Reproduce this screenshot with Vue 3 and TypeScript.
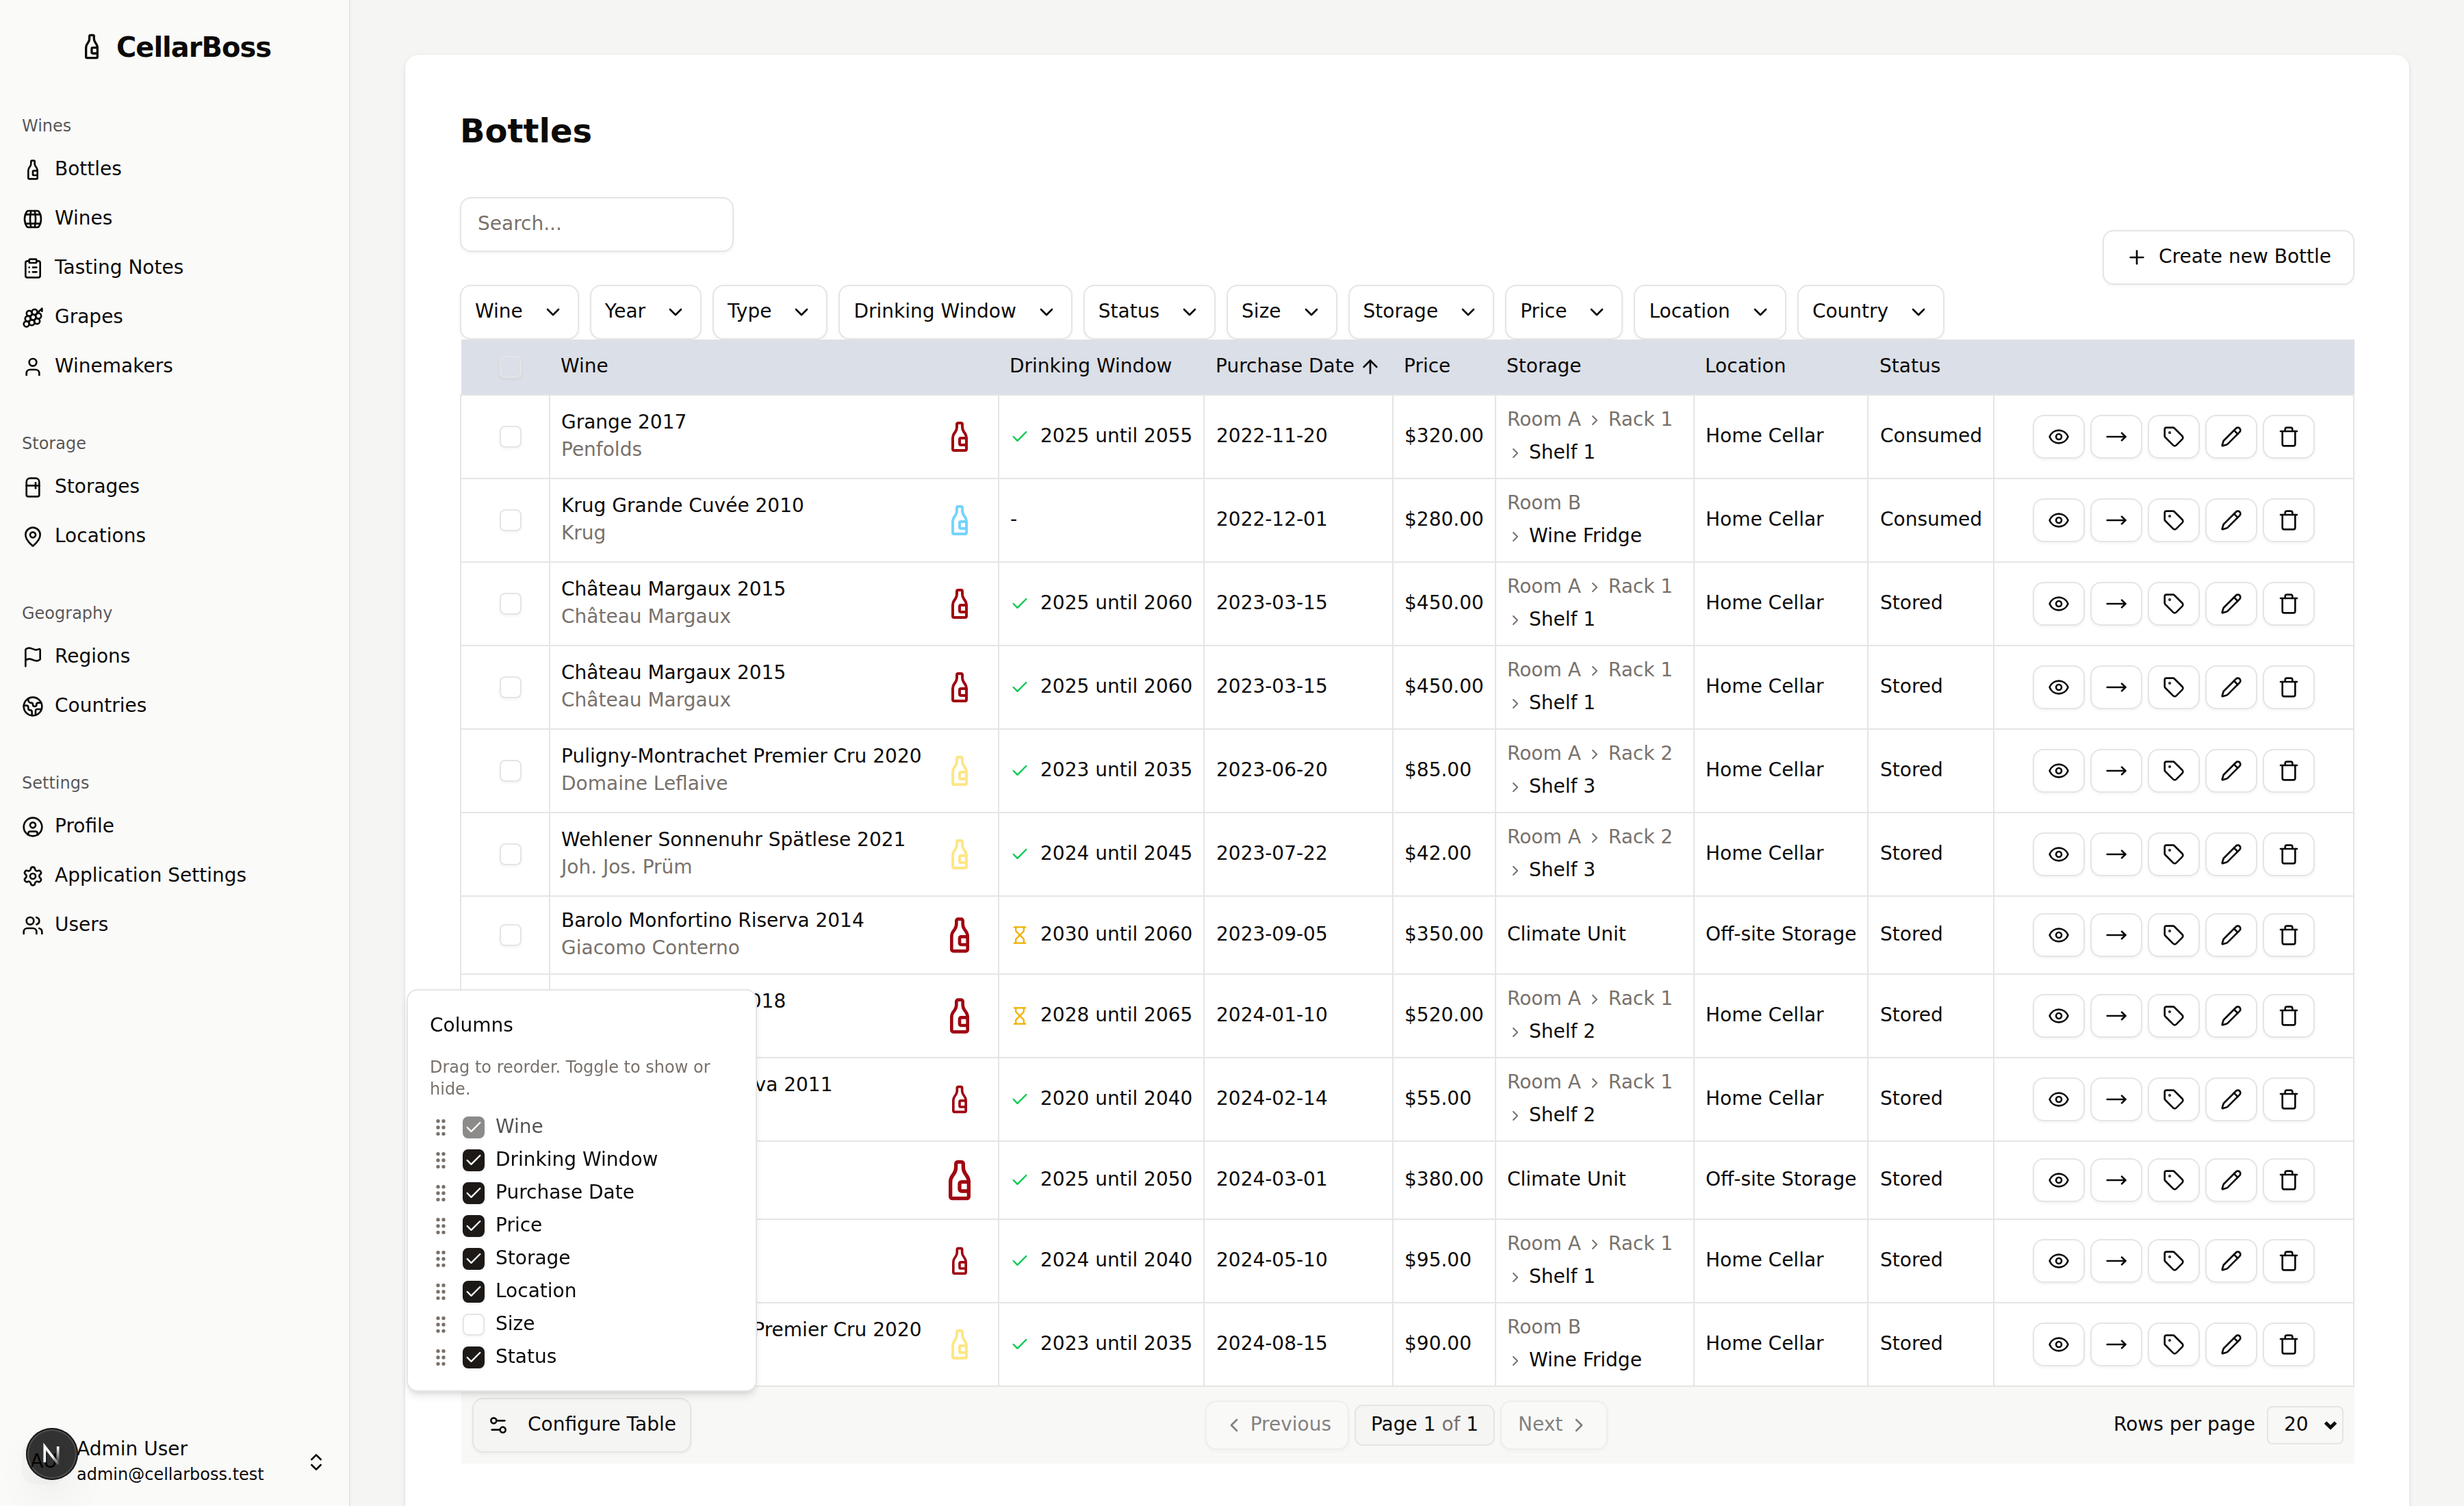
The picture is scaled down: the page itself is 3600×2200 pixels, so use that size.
<script setup lang="ts">
import { h } from 'vue'

const icons: Record<string, string> = {
  bottle:
    '<path d="M10 3a1 1 0 0 1 1-1h2a1 1 0 0 1 1 1v2a6 6 0 0 0 1.2 3.6l.6.8A6 6 0 0 1 17 13v8a1 1 0 0 1-1 1H8a1 1 0 0 1-1-1v-8a6 6 0 0 1 1.2-3.6l.6-.8A6 6 0 0 0 10 5z"/><path d="M17 13h-4a1 1 0 0 0-1 1v3a1 1 0 0 0 1 1h4"/>',
  barrel:
    '<path d="M10 3a41 41 0 0 0 0 18"/><path d="M14 3a41 41 0 0 1 0 18"/><path d="M17 3a2 2 0 0 1 1.68.92 15.25 15.25 0 0 1 0 16.16A2 2 0 0 1 17 21H7a2 2 0 0 1-1.68-.92 15.25 15.25 0 0 1 0-16.16A2 2 0 0 1 7 3z"/><path d="M3.84 17h16.32"/><path d="M3.84 7h16.32"/>',
  clipboard:
    '<rect width="8" height="4" x="8" y="2" rx="1" ry="1"/><path d="M16 4h2a2 2 0 0 1 2 2v14a2 2 0 0 1-2 2H6a2 2 0 0 1-2-2V6a2 2 0 0 1 2-2h2"/><path d="M12 11h4"/><path d="M12 16h4"/><path d="M8 11h.01"/><path d="M8 16h.01"/>',
  grape:
    '<path d="M22 5V2l-5.89 5.89"/><circle cx="16.6" cy="15.89" r="3"/><circle cx="8.11" cy="7.4" r="3"/><circle cx="12.35" cy="11.65" r="3"/><circle cx="13.91" cy="5.85" r="3"/><circle cx="18.15" cy="10.09" r="3"/><circle cx="6.56" cy="13.2" r="3"/><circle cx="10.8" cy="17.44" r="3"/><circle cx="5" cy="19" r="3"/>',
  user: '<path d="M19 21v-2a4 4 0 0 0-4-4H9a4 4 0 0 0-4 4v2"/><circle cx="12" cy="7" r="4"/>',
  fridge:
    '<path d="M5 6a4 4 0 0 1 4-4h6a4 4 0 0 1 4 4v14a2 2 0 0 1-2 2H7a2 2 0 0 1-2-2Z"/><path d="M5 10h14"/><path d="M15 7v6"/>',
  pin: '<path d="M20 10c0 4.993-5.539 10.193-7.399 11.799a1 1 0 0 1-1.202 0C9.539 20.193 4 14.993 4 10a8 8 0 0 1 16 0"/><circle cx="12" cy="10" r="3"/>',
  flag: '<path d="M4 22V4a1 1 0 0 1 .4-.8A6 6 0 0 1 8 2c3 0 5 2 7.333 2q2 0 3.067-.8A1 1 0 0 1 20 4v10a1 1 0 0 1-.4.8A6 6 0 0 1 16 16c-3 0-5-2-8-2a6 6 0 0 0-4 1.528"/>',
  earth:
    '<path d="M21.54 15H17a2 2 0 0 0-2 2v4.54"/><path d="M7 3.34V5a3 3 0 0 0 3 3a2 2 0 0 1 2 2c0 1.1.9 2 2 2a2 2 0 0 0 2-2c0-1.1.9-2 2-2h3.17"/><path d="M11 21.95V18a2 2 0 0 0-2-2a2 2 0 0 1-2-2v-1a2 2 0 0 0-2-2H2.05"/><circle cx="12" cy="12" r="10"/>',
  profile:
    '<circle cx="12" cy="12" r="10"/><circle cx="12" cy="10" r="3"/><path d="M7 20.662V19a2 2 0 0 1 2-2h6a2 2 0 0 1 2 2v1.662"/>',
  gear: '<path d="M9.671 4.136a2.34 2.34 0 0 1 4.659 0 2.34 2.34 0 0 0 3.319 1.915 2.34 2.34 0 0 1 2.33 4.033 2.34 2.34 0 0 0 0 3.831 2.34 2.34 0 0 1-2.33 4.033 2.34 2.34 0 0 0-3.319 1.915 2.34 2.34 0 0 1-4.659 0 2.34 2.34 0 0 0-3.32-1.915 2.34 2.34 0 0 1-2.33-4.033 2.34 2.34 0 0 0 0-3.831A2.34 2.34 0 0 1 6.35 6.051a2.34 2.34 0 0 0 3.319-1.915"/><circle cx="12" cy="12" r="3"/>',
  users:
    '<path d="M16 21v-2a4 4 0 0 0-4-4H6a4 4 0 0 0-4 4v2"/><path d="M16 3.128a4 4 0 0 1 0 7.744"/><path d="M22 21v-2a4 4 0 0 0-3-3.87"/><circle cx="9" cy="7" r="4"/>',
  eye: '<path d="M2.062 12.348a1 1 0 0 1 0-.696 10.75 10.75 0 0 1 19.876 0 1 1 0 0 1 0 .696 10.75 10.75 0 0 1-19.876 0"/><circle cx="12" cy="12" r="3"/>',
  move: '<path d="M18 8L22 12L18 16"/><path d="M2 12H22"/>',
  tag: '<path d="M12.586 2.586A2 2 0 0 0 11.172 2H4a2 2 0 0 0-2 2v7.172a2 2 0 0 0 .586 1.414l8.704 8.704a2.426 2.426 0 0 0 3.42 0l6.58-6.58a2.426 2.426 0 0 0 0-3.42z"/><circle cx="7.5" cy="7.5" r=".5" fill="currentColor"/>',
  pencil:
    '<path d="M21.174 6.812a1 1 0 0 0-3.986-3.987L3.842 16.174a2 2 0 0 0-.5.83l-1.321 4.352a.5.5 0 0 0 .623.622l4.353-1.32a2 2 0 0 0 .83-.497z"/><path d="m15 5 4 4"/>',
  trash:
    '<path d="M19 6v14a2 2 0 0 1-2 2H7a2 2 0 0 1-2-2V6"/><path d="M3 6h18"/><path d="M8 6V4a2 2 0 0 1 2-2h4a2 2 0 0 1 2 2v2"/>',
  sliders: '<path d="M14 17H5"/><path d="M19 7h-9"/><circle cx="17" cy="17" r="3"/><circle cx="7" cy="7" r="3"/>',
  check: '<path d="M20 6 9 17l-5-5"/>',
  hourglass:
    '<path d="M5 22h14"/><path d="M5 2h14"/><path d="M17 22v-4.172a2 2 0 0 0-.586-1.414L12 12l-4.414 4.414A2 2 0 0 0 7 17.828V22"/><path d="M7 2v4.172a2 2 0 0 0 .586 1.414L12 12l4.414-4.414A2 2 0 0 0 17 6.172V2"/>',
  plus: '<path d="M5 12h14"/><path d="M12 5v14"/>',
  down: '<path d="m6 9 6 6 6-6"/>',
  right: '<path d="m9 18 6-6-6-6"/>',
  left: '<path d="m15 18-6-6 6-6"/>',
  up: '<path d="m5 12 7-7 7 7"/><path d="M12 19V5"/>',
  updown: '<path d="m7 15 5 5 5-5"/><path d="m7 9 5-5 5 5"/>',
  grip: '<circle cx="9" cy="12" r="1"/><circle cx="9" cy="5" r="1"/><circle cx="9" cy="19" r="1"/><circle cx="15" cy="12" r="1"/><circle cx="15" cy="5" r="1"/><circle cx="15" cy="19" r="1"/>',
}

const Icon = (props: { name: string; size?: number }) =>
  h('svg', {
    width: props.size ?? 32,
    height: props.size ?? 32,
    viewBox: '0 0 24 24',
    fill: 'none',
    stroke: 'currentColor',
    'stroke-width': 2,
    'stroke-linecap': 'round',
    'stroke-linejoin': 'round',
    innerHTML: icons[props.name],
  })

const groups = [
  {
    label: 'Wines',
    items: [
      ['bottle', 'Bottles'],
      ['barrel', 'Wines'],
      ['clipboard', 'Tasting Notes'],
      ['grape', 'Grapes'],
      ['user', 'Winemakers'],
    ],
  },
  { label: 'Storage', items: [['fridge', 'Storages'], ['pin', 'Locations']] },
  { label: 'Geography', items: [['flag', 'Regions'], ['earth', 'Countries']] },
  { label: 'Settings', items: [['profile', 'Profile'], ['gear', 'Application Settings'], ['users', 'Users']] },
]

const filters = ['Wine', 'Year', 'Type', 'Drinking Window', 'Status', 'Size', 'Storage', 'Price', 'Location', 'Country']

interface Bottle {
  wine: string
  maker: string
  type: 'red' | 'white' | 'sparkling'
  size: number
  window: string
  ready?: boolean
  date: string
  price: string
  storage: string[]
  location: string
  status: string
}

const row = (
  wine: string,
  maker: string,
  type: Bottle['type'],
  size: number,
  window: string,
  date: string,
  price: string,
  storage: string[],
  status = 'Stored',
): Bottle => ({
  wine,
  maker,
  type,
  size,
  window,
  ready: window < '2027',
  date,
  price,
  storage,
  location: storage[0] === 'Climate Unit' ? 'Off-site Storage' : 'Home Cellar',
  status,
})

const bottles: Bottle[] = [
  row('Grange 2017', 'Penfolds', 'red', 48, '2025 until 2055', '2022-11-20', '$320.00', ['Room A', 'Rack 1', 'Shelf 1'], 'Consumed'),
  row('Krug Grande Cuvée 2010', 'Krug', 'sparkling', 48, '-', '2022-12-01', '$280.00', ['Room B', 'Wine Fridge'], 'Consumed'),
  row('Château Margaux 2015', 'Château Margaux', 'red', 48, '2025 until 2060', '2023-03-15', '$450.00', ['Room A', 'Rack 1', 'Shelf 1']),
  row('Château Margaux 2015', 'Château Margaux', 'red', 48, '2025 until 2060', '2023-03-15', '$450.00', ['Room A', 'Rack 1', 'Shelf 1']),
  row('Puligny-Montrachet Premier Cru 2020', 'Domaine Leflaive', 'white', 48, '2023 until 2035', '2023-06-20', '$85.00', ['Room A', 'Rack 2', 'Shelf 3']),
  row('Wehlener Sonnenuhr Spätlese 2021', 'Joh. Jos. Prüm', 'white', 48, '2024 until 2045', '2023-07-22', '$42.00', ['Room A', 'Rack 2', 'Shelf 3']),
  row('Barolo Monfortino Riserva 2014', 'Giacomo Conterno', 'red', 56, '2030 until 2060', '2023-09-05', '$350.00', ['Climate Unit']),
  row('Château Margaux 2018', '', 'red', 56, '2028 until 2065', '2024-01-10', '$520.00', ['Room A', 'Rack 1', 'Shelf 2']),
  row('Viña Tondonia Reserva 2011', '', 'red', 44, '2020 until 2040', '2024-02-14', '$55.00', ['Room A', 'Rack 1', 'Shelf 2']),
  row('', '', 'red', 64, '2025 until 2050', '2024-03-01', '$380.00', ['Climate Unit']),
  row('', '', 'red', 44, '2024 until 2040', '2024-05-10', '$95.00', ['Room A', 'Rack 1', 'Shelf 1']),
  row('Puligny-Montrachet Premier Cru 2020', '', 'white', 48, '2023 until 2035', '2024-08-15', '$90.00', ['Room B', 'Wine Fridge']),
]

const actions = ['eye', 'move', 'tag', 'pencil', 'trash']

const columns = [
  { label: 'Wine', on: true, locked: true },
  { label: 'Drinking Window', on: true },
  { label: 'Purchase Date', on: true },
  { label: 'Price', on: true },
  { label: 'Storage', on: true },
  { label: 'Location', on: true },
  { label: 'Size', on: false },
  { label: 'Status', on: true },
]
</script>

<template>
  <div class="app">
    <aside class="sidebar">
      <div class="brand"><Icon name="bottle" :size="40" /><span>CellarBoss</span></div>
      <nav>
        <section v-for="g in groups" :key="g.label" class="group">
          <div class="group-label">{{ g.label }}</div>
          <a v-for="[icon, label] in g.items" :key="label" class="nav-item">
            <Icon :name="icon" /><span class="t">{{ label }}</span>
          </a>
        </section>
      </nav>
      <div class="account">
        <div class="avatar">AU</div>
        <div class="who">
          <span class="name">Admin User</span>
          <span class="mail">admin@cellarboss.test</span>
        </div>
        <Icon name="updown" />
        <div class="dev-badge">
          <svg width="76" height="76" viewBox="0 0 76 76" fill="none">
            <defs>
              <linearGradient id="diag" x1="38" y1="40" x2="48" y2="54" gradientUnits="userSpaceOnUse">
                <stop stop-color="#fff" />
                <stop offset=".6" stop-color="#fff" stop-opacity=".5" />
                <stop offset="1" stop-color="#fff" stop-opacity="0" />
              </linearGradient>
              <linearGradient id="stem" x1="46" y1="28" x2="46" y2="51" gradientUnits="userSpaceOnUse">
                <stop stop-color="#fff" />
                <stop offset="1" stop-color="#fff" stop-opacity="0" />
              </linearGradient>
            </defs>
            <path d="M49 55.4 27.3 27v23.2" stroke="url(#diag)" stroke-width="3.7" />
            <path d="M46.7 27v24" stroke="url(#stem)" stroke-width="3.7" />
          </svg>
        </div>
      </div>
    </aside>

    <main class="main">
      <div class="card">
        <h1>Bottles</h1>
        <div class="toolbar">
          <div class="tools">
            <div class="search">Search...</div>
            <div class="filters">
              <button v-for="f in filters" :key="f" class="btn filter"><span class="t">{{ f }}</span><Icon name="down" /></button>
            </div>
          </div>
          <button class="btn create"><Icon name="plus" /><span class="t">Create new Bottle</span></button>
        </div>

        <div class="table">
          <div class="grid head">
            <div class="pick"><span class="box" /></div>
            <div><span class="t">Wine</span></div>
            <div><span class="t">Drinking Window</span></div>
            <div><span class="t">Purchase Date</span><Icon name="up" /></div>
            <div><span class="t">Price</span></div>
            <div><span class="t">Storage</span></div>
            <div><span class="t">Location</span></div>
            <div><span class="t">Status</span></div>
            <div />
          </div>
          <div class="body">
            <div v-for="(b, i) in bottles" :key="i" class="grid row">
              <div class="pick"><span class="box" /></div>
              <div class="wine">
                <div class="names">
                  <span>{{ b.wine }}</span>
                  <span class="muted">{{ b.maker }}</span>
                </div>
                <div class="glass" :class="b.type"><Icon name="bottle" :size="b.size" /></div>
              </div>
              <div class="window">
                <template v-if="b.window !== '-'">
                  <Icon :name="b.ready ? 'check' : 'hourglass'" :size="28" :class="b.ready ? 'ok' : 'wait'" />
                </template>
                <span class="t">{{ b.window }}</span>
              </div>
              <div><span class="t">{{ b.date }}</span></div>
              <div><span class="t">{{ b.price }}</span></div>
              <div class="storage">
                <span v-for="(s, n) in b.storage" :key="s" class="crumb" :class="{ muted: n < b.storage.length - 1 }">
                  <Icon v-if="n" name="right" :size="24" class="sep" /><span class="step">{{ s }}</span>
                </span>
              </div>
              <div><span class="t">{{ b.location }}</span></div>
              <div><span class="t">{{ b.status }}</span></div>
              <div class="actions">
                <button v-for="a in actions" :key="a" class="btn act"><Icon :name="a" /></button>
              </div>
            </div>
          </div>
          <div class="foot">
            <div class="foot-left">
              <button class="btn configure"><Icon name="sliders" /><span class="t">Configure Table</span></button>
              <div class="popover">
                <div class="pop-title">Columns</div>
                <p>Drag to reorder. Toggle to show or hide.</p>
                <div class="opts">
                  <div v-for="c in columns" :key="c.label" class="opt" :class="{ locked: c.locked }">
                    <Icon name="grip" class="grip" />
                    <span class="box" :class="{ on: c.on }"><Icon v-if="c.on" name="check" :size="28" /></span>
                    <span class="opt-label">{{ c.label }}</span>
                  </div>
                </div>
              </div>
            </div>
            <div class="pager">
              <button class="btn page off"><Icon name="left" /><span class="t">Previous</span></button>
              <div class="current">Page 1 <span class="muted">of</span> 1</div>
              <button class="btn page off"><span class="t">Next</span><Icon name="right" /></button>
            </div>
            <div class="per-page">
              <span class="t">Rows per page</span>
              <div class="select">
                <span class="t">20</span>
                <svg width="20" height="14" viewBox="0 0 20 14" fill="none" stroke="currentColor" stroke-width="5"><path d="m2.5 3 7.5 7.2L17.5 3" /></svg>
              </div>
            </div>
          </div>
        </div>
      </div>
    </main>
  </div>
</template>

<style>
body {
  margin: 0;
  overflow: hidden;
}
</style>

<style scoped>
.app {
  display: flex;
  width: 3600px;
  height: 2200px;
  overflow: hidden;
  background: #f5f5f4;
  color: #0c0a09;
  font: 28px/40px 'DejaVu Sans', sans-serif;
}
.app *,
.app {
  box-sizing: border-box;
}
svg {
  flex: none;
  display: block;
}
.muted {
  color: #79716b;
}
/* optical centring of labels beside icons */
.t {
  padding-bottom: 2px;
  white-space: nowrap;
}

.sidebar {
  display: flex;
  flex-direction: column;
  width: 512px;
  flex: none;
  background: #fafaf9;
  border-right: 2px solid #e5e5e5;
}
.brand {
  display: flex;
  align-items: center;
  justify-content: center;
  gap: 16px;
  height: 136px;
  font-size: 40px;
  font-weight: 700;
  letter-spacing: -1px;
}
.brand span {
  padding-top: 2px;
}
nav {
  flex: 1;
}
.group {
  display: flex;
  flex-direction: column;
  padding: 16px 16px 0;
  margin-bottom: 32px;
}
.group-label {
  height: 64px;
  line-height: 64px;
  padding: 0 16px;
  font-size: 24px;
  color: rgba(12, 10, 9, 0.7);
}
.nav-item {
  display: flex;
  align-items: center;
  gap: 16px;
  height: 64px;
  padding: 0 16px;
}
.nav-item + .nav-item {
  margin-top: 8px;
}
.account {
  position: relative;
  display: flex;
  align-items: center;
  gap: 16px;
  height: 96px;
  margin: 16px;
  padding: 0 16px;
}
.avatar {
  display: flex;
  align-items: center;
  justify-content: center;
  width: 64px;
  height: 64px;
  padding-bottom: 2px;
  border-radius: 20px;
  background: #f5f5f4;
}
.who {
  flex: 1;
  display: flex;
  flex-direction: column;
}
.name {
  margin: -3px 0 3px;
  line-height: 36px;
}
.mail {
  font-size: 24px;
  line-height: 32px;
}
.dev-badge {
  position: absolute;
  left: 22px;
  top: -2px;
  width: 76px;
  height: 76px;
  border-radius: 50%;
  background: rgba(0, 0, 0, 0.8);
  box-shadow:
    inset 0 0 0 2px #171717,
    inset 0 0 0 4px rgba(255, 255, 255, 0.14),
    0 32px 64px -16px rgba(0, 0, 0, 0.14);
}

.main {
  flex: 1;
  padding: 80px;
}
.card {
  height: 2200px;
  padding: 79px 80px 80px;
  border-radius: 20px;
  background: #fff;
  box-shadow:
    0 2px 6px rgba(0, 0, 0, 0.1),
    0 2px 4px -2px rgba(0, 0, 0, 0.1);
}
h1 {
  margin: 0 0 65px;
  font-size: 48px;
  line-height: 64px;
}
.toolbar {
  display: flex;
  align-items: center;
  justify-content: space-between;
}
.tools {
  display: flex;
  flex-direction: column;
  gap: 48px;
}
.search {
  width: 400px;
  height: 80px;
  padding: 17px 24px;
  border: 2px solid #e5e5e5;
  border-radius: 16px;
  color: #79716b;
  box-shadow: 0 2px 4px rgba(0, 0, 0, 0.05);
}
.filters {
  display: flex;
  gap: 16px;
}
.btn {
  display: flex;
  align-items: center;
  justify-content: center;
  margin: 0;
  padding: 0;
  border: 2px solid #e5e5e5;
  border-radius: 16px;
  background: #fff;
  color: inherit;
  font: inherit;
  white-space: nowrap;
  box-shadow: 0 2px 4px rgba(0, 0, 0, 0.05);
}
.filter {
  height: 80px;
  padding: 0 20px;
  gap: 28px;
}
.create {
  height: 80px;
  margin-bottom: 32px;
  padding: 0 32px;
  gap: 16px;
}

.grid {
  display: grid;
  grid-template-columns: 130px 656px 300px 276px 150px 290px 254px 184px 526px;
}
.head {
  position: relative;
  height: 80px;
  margin-left: 2px;
  background: #dbdfe7;
}
.head > div {
  display: flex;
  align-items: center;
  gap: 7px;
  padding-left: 15px;
}
.body {
  border-top: 2px solid #e5e5e5;
  border-left: 2px solid #e5e5e5;
}
.row {
  border-bottom: 2px solid #e5e5e5;
}
.row > div {
  display: flex;
  align-items: center;
  padding: 16px;
  border-right: 2px solid #e5e5e5;
}
.row > div:nth-child(4),
.row > div:nth-child(8) {
  padding: 16px 0 16px 17px;
}
.head > div:nth-child(4),
.head > div:nth-child(8) {
  padding-left: 16px;
}
.row > .pick,
.head > .pick {
  padding: 0 0 0 56px;
}
.box {
  display: flex;
  align-items: center;
  justify-content: center;
  width: 32px;
  height: 32px;
  flex: none;
  border: 2px solid #e5e5e5;
  border-radius: 8px;
  box-shadow: 0 2px 4px rgba(0, 0, 0, 0.05);
}
.names {
  flex: 1;
  display: flex;
  flex-direction: column;
  height: 80px;
  margin: -1px 0 1px;
}
.glass {
  display: flex;
  justify-content: center;
  width: 80px;
}
.red {
  color: #9f0712;
}
.white {
  color: #fee685;
}
.sparkling {
  color: #74d4ff;
}
.window {
  gap: 16px;
}
.ok {
  color: #00c950;
}
.wait {
  color: #f0b100;
}
.row > .storage {
  flex-wrap: wrap;
  align-content: center;
  gap: 8px;
}
.crumb {
  display: flex;
  align-items: center;
  gap: 8px;
  white-space: nowrap;
}
.step {
  margin: -1px 0 1px;
}
.sep {
  color: #79716b;
}
.row > .actions {
  justify-content: center;
  gap: 8px;
}
.act {
  width: 76px;
  height: 64px;
}

.foot {
  display: grid;
  grid-template-columns: 1fr auto 1fr;
  align-items: center;
  height: 112px;
  margin-left: 2px;
  padding: 0 16px;
  background: #f8f8f7;
}
.foot-left {
  position: relative;
  display: flex;
}
.configure {
  height: 80px;
  padding: 0 20px;
  gap: 27px;
  background: #f5f5f4;
}
.popover {
  position: absolute;
  left: -96px;
  bottom: 89px;
  width: 512px;
  height: 588px;
  padding: 31px 32px 32px;
  border: 2px solid #e5e5e5;
  border-radius: 16px;
  background: #fff;
  box-shadow:
    0 8px 12px -2px rgba(0, 0, 0, 0.1),
    0 4px 8px -4px rgba(0, 0, 0, 0.1);
  will-change: transform;
}
.popover p {
  margin: 25px 0 20px;
  font-size: 24px;
  line-height: 32px;
  color: #79716b;
}
.opts {
  display: flex;
  flex-direction: column;
  gap: 8px;
}
.opt {
  display: flex;
  align-items: center;
  gap: 16px;
}
.opt-label {
  margin: -1px 0 1px;
}
.grip {
  color: #79716b;
}
.on {
  border-color: #1c1917;
  background: #1c1917;
  color: #fafaf9;
}
.locked .box {
  opacity: 0.5;
}
.locked .opt-label {
  opacity: 0.7;
}
.pager {
  display: flex;
  align-items: center;
  gap: 8px;
  margin-right: 4px;
}
.page {
  height: 72px;
  padding: 0 24px;
  gap: 8px;
}
.off {
  opacity: 0.5;
  background: #fafaf9;
}
.current {
  height: 60px;
  padding: 7px 22px;
  border: 2px solid #e5e5e5;
  border-radius: 12px;
  background: #f5f5f4;
}
.per-page {
  display: flex;
  align-items: center;
  justify-content: flex-end;
  gap: 17px;
}
.select {
  display: flex;
  align-items: center;
  justify-content: space-between;
  width: 112px;
  height: 56px;
  padding: 0 7px 0 23px;
  border: 2px solid #e5e5e5;
  border-radius: 8px;
}
</style>
